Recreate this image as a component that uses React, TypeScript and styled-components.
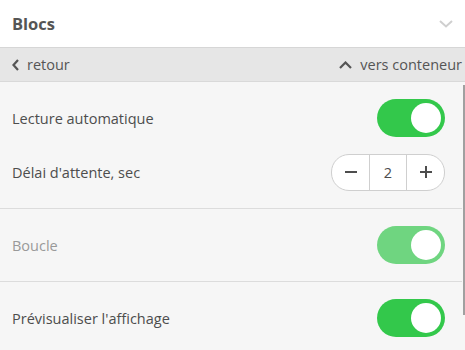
import React, { useState } from 'react';
import styled, { createGlobalStyle } from 'styled-components';

const GlobalStyle = createGlobalStyle`
  html, body {
    margin: 0;
    padding: 0;
    background: #f6f6f6;
  }
  body {
    font-family: "Open Sans", "Noto Sans", sans-serif;
    color: #4d4d4d;
  }
`;

const Panel = styled.div`
  width: 465px;
  height: 350px;
  overflow: hidden;
  display: flex;
  flex-direction: column;
  background: #f6f6f6;
  position: relative;
`;

const Header = styled.div`
  flex-shrink: 0;
  height: 48px;
  display: flex;
  align-items: center;
  justify-content: space-between;
  padding: 0 12px;
  background: #fff;
  border-bottom: 1px solid #d6d6d6;
  box-sizing: border-box;
`;

const Title = styled.h2`
  margin: 0;
  font-size: 16.5px;
  font-weight: 700;
  color: #555;
`;

const NavBar = styled.div`
  flex-shrink: 0;
  height: 34px;
  display: flex;
  align-items: center;
  justify-content: space-between;
  padding: 0 3px 0 12px;
  background: #e6e6e6;
  border-bottom: 1px solid #d9d9d9;
  box-sizing: border-box;
`;

const NavLink = styled.a`
  display: flex;
  align-items: center;
  gap: 8px;
  font-size: 14.5px;
  color: #555;
  cursor: pointer;
`;

const Section = styled.div<{ $last?: boolean }>`
  flex-shrink: 0;
  display: flex;
  flex-direction: column;
  gap: 16px;
  padding: 17px 17px 17px 12px;
  border-bottom: ${(p) => (p.$last ? 'none' : '1px solid #dcdcdc')};
  margin-right: 3px;
`;

const Row = styled.div`
  display: flex;
  align-items: center;
  justify-content: space-between;
  min-height: 38px;
`;

const Label = styled.span<{ $muted?: boolean }>`
  font-size: 14.5px;
  color: ${(p) => (p.$muted ? '#999' : '#4d4d4d')};
`;

const Track = styled.button<{ $on: boolean; $muted?: boolean }>`
  width: 68px;
  height: 38px;
  border: none;
  border-radius: 19px;
  padding: 0 4px;
  display: flex;
  align-items: center;
  justify-content: ${(p) => (p.$on ? 'flex-end' : 'flex-start')};
  background: ${(p) => (!p.$on ? '#ccc' : p.$muted ? '#6fd580' : '#33c84b')};
  cursor: pointer;
`;

const Knob = styled.span`
  width: 30px;
  height: 30px;
  border-radius: 50%;
  background: #fff;
`;

const Stepper = styled.div`
  display: flex;
  height: 37px;
  border: 1px solid #cfcfcf;
  border-radius: 18px;
  background: #fff;
  overflow: hidden;
  box-sizing: border-box;
`;

const StepButton = styled.button`
  width: 37px;
  border: none;
  background: transparent;
  display: flex;
  align-items: center;
  justify-content: center;
  cursor: pointer;
  padding: 0;
`;

const StepValue = styled.div`
  width: 36px;
  display: flex;
  align-items: center;
  justify-content: center;
  font-size: 14.5px;
  color: #4d4d4d;
  border-left: 1px solid #cfcfcf;
  border-right: 1px solid #cfcfcf;
`;

const ScrollThumb = styled.div`
  position: absolute;
  right: 0;
  top: 85px;
  width: 2px;
  height: 230px;
  background: #a0a0a0;
`;

const Toggle: React.FC<{ on: boolean; muted?: boolean; onChange: () => void }> = ({ on, muted, onChange }) => (
  <Track $on={on} $muted={muted} onClick={onChange}>
    <Knob />
  </Track>
);

const App: React.FC = () => {
  const [autoplay, setAutoplay] = useState(true);
  const [loop, setLoop] = useState(true);
  const [preview, setPreview] = useState(true);
  const [delay, setDelay] = useState(2);

  return (
    <Panel>
      <GlobalStyle />
      <Header>
        <Title>Blocs</Title>
        <svg width="14" height="8" viewBox="0 0 14 8">
          <path d="M1 1l6 5.5L13 1" fill="none" stroke="#cfcfcf" strokeWidth="2" />
        </svg>
      </Header>
      <NavBar>
        <NavLink>
          <svg width="7" height="12" viewBox="0 0 7 12">
            <path d="M6 1L1.5 6 6 11" fill="none" stroke="#555" strokeWidth="2.2" />
          </svg>
          retour
        </NavLink>
        <NavLink>
          <svg width="13" height="8" viewBox="0 0 13 8">
            <path d="M1 7l5.5-5.5L12 7" fill="none" stroke="#555" strokeWidth="2.2" />
          </svg>
          vers conteneur
        </NavLink>
      </NavBar>
      <Section>
        <Row>
          <Label>Lecture automatique</Label>
          <Toggle on={autoplay} onChange={() => setAutoplay(!autoplay)} />
        </Row>
        <Row>
          <Label>Délai d'attente, sec</Label>
          <Stepper>
            <StepButton onClick={() => setDelay(Math.max(0, delay - 1))}>
              <svg width="14" height="14" viewBox="0 0 14 14">
                <path d="M1 7h12" stroke="#4d4d4d" strokeWidth="2" />
              </svg>
            </StepButton>
            <StepValue>{delay}</StepValue>
            <StepButton onClick={() => setDelay(delay + 1)}>
              <svg width="14" height="14" viewBox="0 0 14 14">
                <path d="M1 7h12M7 1v12" stroke="#4d4d4d" strokeWidth="2" />
              </svg>
            </StepButton>
          </Stepper>
        </Row>
      </Section>
      <Section>
        <Row>
          <Label $muted>Boucle</Label>
          <Toggle on={loop} muted onChange={() => setLoop(!loop)} />
        </Row>
      </Section>
      <Section $last>
        <Row>
          <Label>Prévisualiser l'affichage</Label>
          <Toggle on={preview} onChange={() => setPreview(!preview)} />
        </Row>
      </Section>
      <ScrollThumb />
    </Panel>
  );
};

export default App;
